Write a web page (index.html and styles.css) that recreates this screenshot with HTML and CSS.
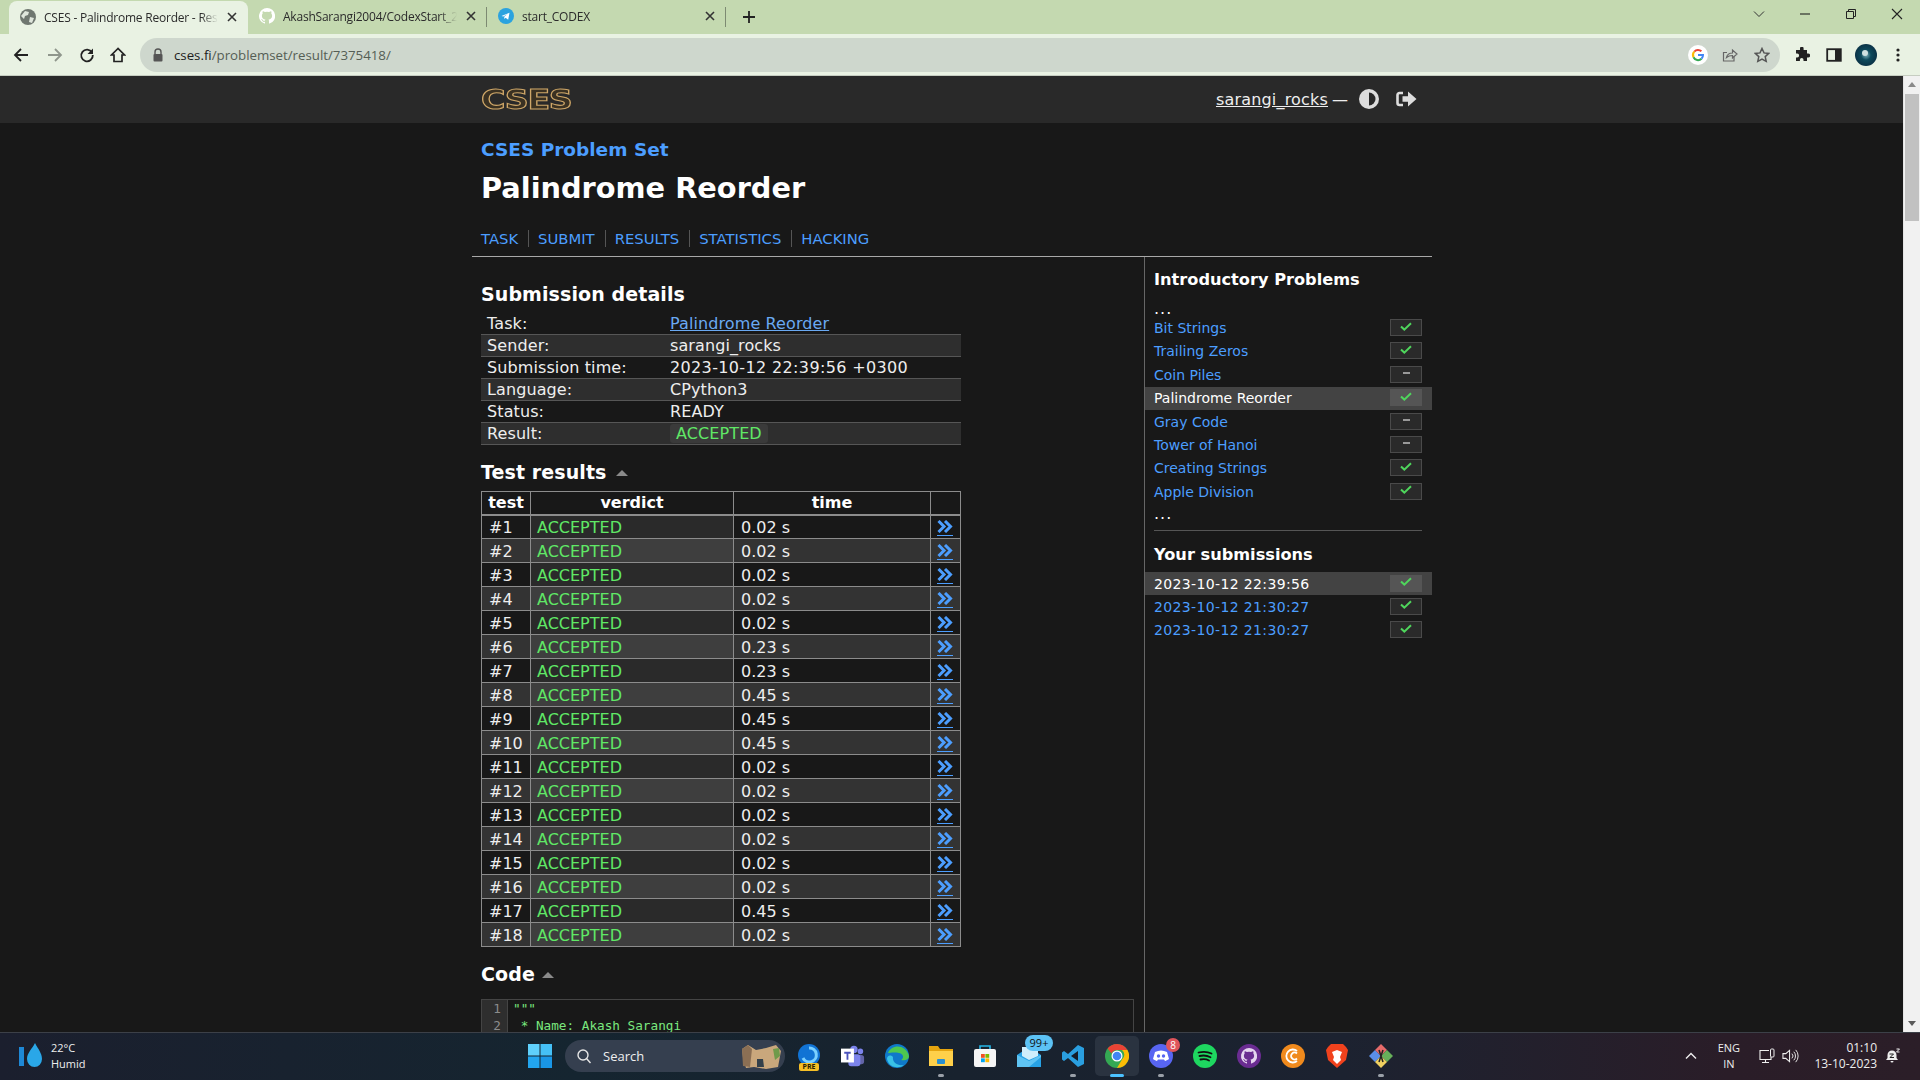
FILE: index.html
```html
<!DOCTYPE html>
<html lang="en">
<head>
<meta charset="utf-8">
<title>CSES - Palindrome Reorder - Results</title>
<link rel="stylesheet" href="styles.css">
</head>
<body>
<svg class="defs" width="0" height="0" aria-hidden="true">
  <symbol id="chk" viewBox="0 0 12 9"><path d="M1 4.5 4.3 7.6 11 1.2" fill="none" stroke="#4fd65c" stroke-width="2"/></symbol>
  <symbol id="dbl" viewBox="0 0 16 13"><path d="M1.5 1 7 6.5 1.5 12M8 1l5.5 5.5L8 12" fill="none" stroke="#4c9eff" stroke-width="3"/></symbol>
  <symbol id="x" viewBox="0 0 12 12"><path d="M2 2l8 8M10 2l-8 8" stroke="#333" stroke-width="1.6" fill="none"/></symbol>
</svg>
<div class="chrome">
  <div class="tabstrip">
    <div class="tab active">
      <svg class="fav" viewBox="0 0 16 16"><circle cx="8" cy="8" r="8" fill="#6f7770"/><path d="M5 2l4 1-1 3-3 1-1 3-3-3zM10 8l4 1-2 5-3-1z" fill="#dfe6dc"/></svg>
      <span class="tabtext">CSES - Palindrome Reorder - Res</span>
      <svg class="tabx" viewBox="0 0 12 12"><use href="#x"/></svg>
    </div>
    <div class="tab">
      <svg class="fav" viewBox="0 0 16 16"><path d="M8 0a8 8 0 0 0-2.5 15.6c.4.1.5-.2.5-.4v-1.4c-2.2.5-2.7-1-2.7-1-.4-.9-.9-1.200-.9-1.200-.7-.5.1-.5.1-.5.8.100 1.200.8 1.200.8.700 1.200 1.900.9 2.300.700.100-.5.300-.9.500-1.100-1.800-.2-3.600-.9-3.600-4 0-.9.300-1.600.8-2.100-.1-.2-.4-1 .1-2.100 0 0 .7-.2 2.200.8a7.600 7.600 0 0 1 4 0c1.500-1 2.200-.8 2.200-.8.400 1.100.2 1.900.1 2.100.5.500.8 1.200.8 2.100 0 3.100-1.900 3.800-3.700 4 .3.300.6.800.6 1.500v2.200c0 .2.100.5.600.4A8 8 0 0 0 8 0z" fill="#fff"/></svg>
      <span class="tabtext">AkashSarangi2004/CodexStart_2</span>
      <svg class="tabx" viewBox="0 0 12 12"><use href="#x"/></svg>
    </div>
    <div class="tab">
      <svg class="fav" viewBox="0 0 16 16"><circle cx="8" cy="8" r="8" fill="#2ba3df"/><path d="M3.500 8l8-3.300-1.300 7-2.600-1.900-1.200 1.200-.2-2.200 3.500-2.900-4.400 2.700z" fill="#fff"/></svg>
      <span class="tabtext">start_CODEX</span>
      <svg class="tabx" viewBox="0 0 12 12"><use href="#x"/></svg>
    </div>
    <svg class="plus" viewBox="0 0 14 14"><path d="M7 1v12M1 7h12" stroke="#222" stroke-width="1.800"/></svg>
    <div class="winctl">
      <span><svg viewBox="0 0 12 12"><path d="M1 3.500l5 5 5-5" fill="none" stroke="#333"/></svg></span>
      <span><svg viewBox="0 0 12 12"><path d="M1 6h10" stroke="#222" stroke-width="1.100"/></svg></span>
      <span><svg viewBox="0 0 12 12"><path d="M1.500 3.500h7v7h-7zM3.500 3.500v-2h7v7h-2" fill="none" stroke="#222"/></svg></span>
      <span><svg viewBox="0 0 12 12"><path d="M1 1l10 10M11 1L1 11" stroke="#222" stroke-width="1.100"/></svg></span>
    </div>
  </div>
  <div class="toolbar">
    <span class="tb w34"><svg viewBox="0 0 16 16"><path d="M15 8H2M8 2 2 8l6 6" fill="none" stroke="#222" stroke-width="1.800"/></svg></span>
    <span class="tb w34"><svg viewBox="0 0 16 16"><path d="M1 8h13M8 2l6 6-6 6" fill="none" stroke="#8f968c" stroke-width="1.800"/></svg></span>
    <span class="tb w30"><svg viewBox="0 0 16 16"><path d="M13 5.500A5.800 5.800 0 1 0 13.800 8" fill="none" stroke="#222" stroke-width="1.800"/><path d="M14 1.500V7H8.500z" fill="#222"/></svg></span>
    <span class="tb w32"><svg viewBox="0 0 16 16"><path d="M8 1.500 1.500 8H4v6.500h8V8h2.500z" fill="none" stroke="#222" stroke-width="1.700"/></svg></span>
    <div class="omni">
      <svg class="lock" viewBox="0 0 12 14"><path d="M3 6V4a3 3 0 0 1 6 0v2" fill="none" stroke="#555" stroke-width="1.400"/><rect x="1.500" y="6" width="9" height="7.500" rx="1" fill="#555"/></svg>
      <span class="url"><b>cses.fi</b>/problemset/result/7375418/</span>
      <span class="omni-icons">
        <span class="tb w32"><svg viewBox="0 0 20 20"><circle cx="10" cy="10" r="10" fill="#fff"/><path d="M6.300 6.600A5 5 0 0 1 13.400 6.300" fill="none" stroke="#ea4335" stroke-width="2"/><path d="M5.500 12.300a5 5 0 0 1 .8-5.700" fill="none" stroke="#fbbc05" stroke-width="2"/><path d="M13.500 13.700a5 5 0 0 1-8-1.400" fill="none" stroke="#34a853" stroke-width="2"/><path d="M10 10h5a5 5 0 0 1-1.500 3.700" fill="none" stroke="#4285f4" stroke-width="2"/></svg></span>
        <span class="tb w32"><svg viewBox="0 0 16 16"><path d="M12 9.500V14H1.500V5.500H5" fill="none" stroke="#666" stroke-width="1.200"/><path d="M4.500 10.500c.7-3 3-4.500 6-4.500V3l4.500 4-4.500 4V8.500c-2.500 0-4.500.7-6 2z" fill="none" stroke="#666" stroke-width="1.200"/></svg></span>
        <span class="tb w32"><svg viewBox="0 0 16 16"><path d="M8 1.500l2 4.400 4.800.5-3.600 3.200 1 4.700L8 12l-4.200 2.300 1-4.700L1.200 6.400 6 5.900z" fill="none" stroke="#555" stroke-width="1.500"/></svg></span>
      </span>
    </div>
    <span class="tb w32 ml6"><svg viewBox="0 0 16 16"><path d="M6 1.500a1.800 1.800 0 0 1 3.600 0V3H13v3.500h1.200a2 2 0 0 1 0 4H13V14H9.500v-1.200a1.800 1.800 0 0 0-3.600 0V14H2v-3.600h1.200a1.900 1.900 0 0 0 0-3.800H2V3h4z" fill="#222"/></svg></span>
    <span class="tb w32"><svg viewBox="0 0 16 16"><rect x="1.200" y="2.200" width="13.600" height="11.600" fill="none" stroke="#222" stroke-width="1.800"/><rect x="9" y="2" width="6" height="12" fill="#222"/></svg></span>
    <span class="tb w32"><svg class="avatar" viewBox="0 0 22 22"><defs><radialGradient id="av"><stop offset="0" stop-color="#7fb3bd"/><stop offset=".45" stop-color="#0d4a5c"/><stop offset="1" stop-color="#0a3246"/></radialGradient></defs><circle cx="11" cy="11" r="11" fill="url(#av)"/><circle cx="10" cy="9" r="3" fill="#cfe0e0"/></svg></span>
    <span class="tb w32"><svg viewBox="0 0 16 16"><circle cx="8" cy="3" r="1.600" fill="#222"/><circle cx="8" cy="8" r="1.600" fill="#222"/><circle cx="8" cy="13" r="1.600" fill="#222"/></svg></span>
  </div>
</div>

<div class="viewport">
  <div class="page">
    <header class="sitehead">
      <div class="wrap headrow">
        <a class="logo">CSES</a>
        <div class="user">
          <a class="username">sarangi_rocks</a>
          <span class="dash">—</span>
          <svg class="contrast" viewBox="0 0 20 20"><circle cx="10" cy="10" r="10" fill="#ddd"/><path d="M10 3.500a6.500 6.500 0 0 1 0 13z" fill="#292929"/></svg>
          <svg class="logout" viewBox="0 0 22 18"><path d="M8 3H4.500A2 2 0 0 0 2.500 5v8a2 2 0 0 0 2 2H8" fill="none" stroke="#ddd" stroke-width="2.600"/><path d="M7.500 6.200h5.500V1.500L21.500 9 13 16.500v-4.700H7.500z" fill="#ddd"/></svg>
        </div>
      </div>
    </header>
    <div class="wrap">
      <div class="titles">
        <h2 class="settitle">CSES Problem Set</h2>
        <h1 class="tasktitle">Palindrome Reorder</h1>
        <nav class="tabs-nav"><a>TASK</a><a>SUBMIT</a><a>RESULTS</a><a>STATISTICS</a><a>HACKING</a></nav>
      </div>
      <div class="columns">
        <main class="content">
          <h3 class="sec first">Submission details</h3>
          <div class="details">
            <div class="drow"><span>Task:</span><a class="dlink">Palindrome Reorder</a></div>
            <div class="drow"><span>Sender:</span><span>sarangi_rocks</span></div>
            <div class="drow"><span>Submission time:</span><span class="num">2023-10-12 22:39:56 +0300</span></div>
            <div class="drow"><span>Language:</span><span>CPython3</span></div>
            <div class="drow"><span>Status:</span><span>READY</span></div>
            <div class="drow"><span>Result:</span><span class="chip">ACCEPTED</span></div>
          </div>
          <h3 class="sec">Test results <i class="tri"></i></h3>
          <table class="tests">
            <colgroup><col class="c1"><col class="c2"><col class="c3"><col class="c4"></colgroup>
            <thead><tr><th>test</th><th>verdict</th><th>time</th><th></th></tr></thead>
            <tbody>
              <tr><td>#1</td><td class="v">ACCEPTED</td><td>0.02 s</td><td class="go"><a><svg><use href="#dbl"/></svg></a></td></tr>
              <tr><td>#2</td><td class="v">ACCEPTED</td><td>0.02 s</td><td class="go"><a><svg><use href="#dbl"/></svg></a></td></tr>
              <tr><td>#3</td><td class="v">ACCEPTED</td><td>0.02 s</td><td class="go"><a><svg><use href="#dbl"/></svg></a></td></tr>
              <tr><td>#4</td><td class="v">ACCEPTED</td><td>0.02 s</td><td class="go"><a><svg><use href="#dbl"/></svg></a></td></tr>
              <tr><td>#5</td><td class="v">ACCEPTED</td><td>0.02 s</td><td class="go"><a><svg><use href="#dbl"/></svg></a></td></tr>
              <tr><td>#6</td><td class="v">ACCEPTED</td><td>0.23 s</td><td class="go"><a><svg><use href="#dbl"/></svg></a></td></tr>
              <tr><td>#7</td><td class="v">ACCEPTED</td><td>0.23 s</td><td class="go"><a><svg><use href="#dbl"/></svg></a></td></tr>
              <tr><td>#8</td><td class="v">ACCEPTED</td><td>0.45 s</td><td class="go"><a><svg><use href="#dbl"/></svg></a></td></tr>
              <tr><td>#9</td><td class="v">ACCEPTED</td><td>0.45 s</td><td class="go"><a><svg><use href="#dbl"/></svg></a></td></tr>
              <tr><td>#10</td><td class="v">ACCEPTED</td><td>0.45 s</td><td class="go"><a><svg><use href="#dbl"/></svg></a></td></tr>
              <tr><td>#11</td><td class="v">ACCEPTED</td><td>0.02 s</td><td class="go"><a><svg><use href="#dbl"/></svg></a></td></tr>
              <tr><td>#12</td><td class="v">ACCEPTED</td><td>0.02 s</td><td class="go"><a><svg><use href="#dbl"/></svg></a></td></tr>
              <tr><td>#13</td><td class="v">ACCEPTED</td><td>0.02 s</td><td class="go"><a><svg><use href="#dbl"/></svg></a></td></tr>
              <tr><td>#14</td><td class="v">ACCEPTED</td><td>0.02 s</td><td class="go"><a><svg><use href="#dbl"/></svg></a></td></tr>
              <tr><td>#15</td><td class="v">ACCEPTED</td><td>0.02 s</td><td class="go"><a><svg><use href="#dbl"/></svg></a></td></tr>
              <tr><td>#16</td><td class="v">ACCEPTED</td><td>0.02 s</td><td class="go"><a><svg><use href="#dbl"/></svg></a></td></tr>
              <tr><td>#17</td><td class="v">ACCEPTED</td><td>0.45 s</td><td class="go"><a><svg><use href="#dbl"/></svg></a></td></tr>
              <tr><td>#18</td><td class="v">ACCEPTED</td><td>0.02 s</td><td class="go"><a><svg><use href="#dbl"/></svg></a></td></tr>
            </tbody>
          </table>
          <h3 class="sec">Code <i class="tri near"></i></h3>
          <div class="code">
            <div class="gutter"><div>1</div><div>2</div></div>
            <pre class="src">"""
 * Name: Akash Sarangi</pre>
          </div>
        </main>
        <aside class="side">
          <h4 class="sidehead">Introductory Problems</h4>
          <div class="srow dots">...</div>
          <div class="srow"><a>Bit Strings</a><span class="box"><svg><use href="#chk"/></svg></span></div>
          <div class="srow"><a>Trailing Zeros</a><span class="box"><svg><use href="#chk"/></svg></span></div>
          <div class="srow"><a>Coin Piles</a><span class="box"><i class="minus"></i></span></div>
          <div class="srow cur"><a>Palindrome Reorder</a><span class="box"><svg><use href="#chk"/></svg></span></div>
          <div class="srow"><a>Gray Code</a><span class="box"><i class="minus"></i></span></div>
          <div class="srow"><a>Tower of Hanoi</a><span class="box"><i class="minus"></i></span></div>
          <div class="srow"><a>Creating Strings</a><span class="box"><svg><use href="#chk"/></svg></span></div>
          <div class="srow"><a>Apple Division</a><span class="box"><svg><use href="#chk"/></svg></span></div>
          <div class="srow dots end">...</div>
          <hr class="sep">
          <h4 class="sidehead sub">Your submissions</h4>
          <div class="srow cur"><a class="num">2023-10-12 22:39:56</a><span class="box"><svg><use href="#chk"/></svg></span></div>
          <div class="srow"><a class="num">2023-10-12 21:30:27</a><span class="box"><svg><use href="#chk"/></svg></span></div>
          <div class="srow"><a class="num">2023-10-12 21:30:27</a><span class="box"><svg><use href="#chk"/></svg></span></div>
        </aside>
      </div>
    </div>
  </div>
  <div class="scrollbar">
    <i class="sb-up"></i>
    <div class="sb-thumb"></div>
    <i class="sb-down"></i>
  </div>
</div>

<footer class="taskbar">
  <div class="weather">
    <svg class="wicon" viewBox="0 0 24 26"><rect x="0" y="4" width="5" height="19" fill="#1e88d6"/><path d="M16 0c3 6 7 10 7 16a7.500 8 0 0 1-15 0c0-6 5-10 8-16z" fill="#2aa7e8"/></svg>
    <div class="wtext"><div>22°C</div><div>Humid</div></div>
  </div>
  <span class="ti win"><svg viewBox="0 0 24 24"><rect x="0" y="0" width="11.500" height="11.500" fill="#5fd0fb"/><rect x="12.500" y="0" width="11.500" height="11.500" fill="#45c0f6"/><rect x="0" y="12.500" width="11.500" height="11.500" fill="#22a5ee"/><rect x="12.500" y="12.500" width="11.500" height="11.500" fill="#1996e6"/></svg></span>
  <div class="search">
    <svg viewBox="0 0 16 16" class="sicon"><circle cx="7" cy="7" r="5" fill="none" stroke="#e6e6e6" stroke-width="1.400"/><path d="M10.500 10.500 14.500 15" stroke="#e6e6e6" stroke-width="1.400"/></svg>
    <span>Search</span>
    <svg viewBox="0 0 44 26" class="doodle"><path d="M3 6l6-4 8 5 10-2 10-3 5 6-3 16-12 2-12-2-8 1-3-10z" fill="#c9a77c"/><path d="M3 6l6-4 4 4-2 18-7-1z" fill="#8b6f54"/><path d="M34 6l6-1 1 8-5 4z" fill="#6f9a4a"/><path d="M18 16l6 0 1 8-7 0z" fill="#33404a"/></svg>
  </div>
  <div class="apps">
    <span class="ti"><svg viewBox="0 0 24 24"><circle cx="12" cy="11" r="11" fill="#1173d4"/><path d="M12 4a7 7 0 1 1-6 10" fill="none" stroke="#7ad0ff" stroke-width="3"/></svg><b class="badge pre">PRE</b></span>
    <span class="ti"><svg viewBox="0 0 26 24"><circle cx="21" cy="7" r="3" fill="#7b83eb"/><rect x="15" y="11" width="10" height="10" rx="3" fill="#6264a7"/><circle cx="14" cy="5" r="4" fill="#7b83eb"/><rect x="8" y="10" width="13" height="13" rx="3" fill="#7b83eb"/><rect x="0" y="4" width="14" height="15" fill="#fff"/><path d="M3.500 7.500h7v2H8V16H6V9.500H3.500z" fill="#4b53bc"/></svg></span>
    <span class="ti"><svg viewBox="0 0 24 24"><circle cx="12" cy="12" r="12" fill="#0f79c9"/><path d="M3 9C6 1 20-1 24 12c0 4-5 5-8 4 3-2 3-6-2-7-5-1-9 0-11 0z" fill="#4ec84f"/><path d="M8 13c-1 6 6 9 11 8-5 4-15 3-17-6 0-3 3-5 6-2z" fill="#39c2e6"/></svg></span>
    <span class="ti"><svg viewBox="0 0 24 24"><path d="M0 2h9l2 3h13v3H0z" fill="#e6a50f"/><rect x="0" y="7" width="24" height="15" fill="#ffd04a"/><rect x="8" y="15" width="8" height="5" rx="1" fill="#2a8fd0"/></svg><i class="run"></i></span>
    <span class="ti"><svg viewBox="0 0 24 24"><path d="M7 6V2h10v4" fill="none" stroke="#25b7e8" stroke-width="1.600"/><rect x="1" y="5" width="22" height="18" rx="2" fill="#f5f5f5"/><rect x="8" y="10" width="3.800" height="3.800" fill="#f25022"/><rect x="12.400" y="10" width="3.800" height="3.800" fill="#7fba00"/><rect x="8" y="14.400" width="3.800" height="3.800" fill="#00a4ef"/><rect x="12.400" y="14.400" width="3.800" height="3.800" fill="#ffb900"/></svg></span>
    <span class="ti"><svg viewBox="0 0 24 24"><path d="M0 11 12 3l12 8v12H0z" fill="#27a2e5"/><path d="M0 11l12 6 12-6v2L12 23H0z" fill="#5fc4f3"/><path d="M5 3h16v9l-9 4-7-4z" fill="#cfeefb"/></svg><b class="badge mail">99+</b></span>
    <span class="ti"><svg viewBox="0 0 24 24"><path d="M17 1 23 4v16l-6 3-10-9-4 3-2-1.500V8.500L3 7l4 3z" fill="#2a9fe0"/><path d="M17 7 10 12l7 5z" fill="#151c28"/></svg><i class="run"></i></span>
    <span class="ti sel"><svg viewBox="0 0 24 24"><circle cx="12" cy="12" r="12" fill="#34a853"/><path d="M12 0a12 12 0 0 1 10.400 6H12a6 6 0 0 0-5.500 3.500L2.600 4.600A12 12 0 0 1 12 0z" fill="#ea4335"/><path d="M22.400 6A12 12 0 0 1 12 24l5-8.500A6 6 0 0 0 17 6z" fill="#fbbc05"/><circle cx="12" cy="12" r="5.500" fill="#fff"/><circle cx="12" cy="12" r="4.300" fill="#4285f4"/></svg><i class="run wide"></i></span>
    <span class="ti"><svg viewBox="0 0 24 24"><circle cx="12" cy="12" r="12" fill="#5865f2"/><path d="M6 8c4-2 8-2 12 0l2 7c-1.500 1.200-3 1.800-4 2l-1-1.500h-6L8 17c-1-.2-2.500-.8-4-2z" fill="#fff"/><circle cx="9.500" cy="12" r="1.700" fill="#5865f2"/><circle cx="14.500" cy="12" r="1.700" fill="#5865f2"/></svg><b class="badge red">8</b><i class="run"></i></span>
    <span class="ti"><svg viewBox="0 0 24 24"><circle cx="12" cy="12" r="12" fill="#1ed760"/><path d="M5.500 8.500c4-1 9-1 13 1M6.500 12c3.500-.8 7.500-.6 11 1.200M7.500 15.500c3-.6 6-.4 8.500 1" fill="none" stroke="#111" stroke-width="1.800" stroke-linecap="round"/></svg></span>
    <span class="ti"><svg viewBox="-4 -4 24 24"><circle cx="8" cy="8" r="12" fill="#6a2c91"/><path d="M8 0a8 8 0 0 0-2.500 15.600c.4.100.5-.2.5-.4v-1.400c-2.200.5-2.700-1-2.700-1-.4-.9-.9-1.200-.9-1.200-.7-.5.1-.5.1-.5.8.100 1.200.8 1.200.8.700 1.200 1.900.9 2.300.7.100-.5.300-.9.500-1.100-1.800-.2-3.600-.9-3.600-4 0-.9.300-1.600.8-2.100-.1-.2-.4-1 .1-2.100 0 0 .7-.2 2.200.8a7.600 7.600 0 0 1 4 0c1.500-1 2.200-.8 2.200-.8.400 1.100.2 1.900.1 2.100.5.500.8 1.200.8 2.100 0 3.100-1.900 3.800-3.700 4 .3.300.6.800.6 1.500v2.200c0 .2.100.5.600.4A8 8 0 0 0 8 0z" fill="#e5d5ef"/></svg></span>
    <span class="ti"><svg viewBox="0 0 24 24"><circle cx="12" cy="12" r="12" fill="#f08a1d"/><path d="M16 7a6.500 6.500 0 1 0 0 10" fill="none" stroke="#fff" stroke-width="1.800"/><path d="M16 9.500a3.500 3.500 0 1 0 0 5" fill="none" stroke="#fff" stroke-width="1.800"/></svg></span>
    <span class="ti"><svg viewBox="0 0 22 24"><path d="M5 0h12l3 3 2 3-2 10-9 8-9-8L0 6l2-3z" fill="#f1421d"/><path d="M6 8l5-2 5 2-2 5 1 3-4 4-4-4 1-3z" fill="#fff"/></svg></span>
    <span class="ti"><svg viewBox="0 0 24 24"><path d="M6 6l6 6-6 6-6-6z" fill="#5a8ee6"/><path d="M12 0l6 6-6 6-6-6z" fill="#e66a6a"/><path d="M18 6l6 6-6 6-6-6z" fill="#67b05a"/><path d="M12 12l6 6-6 6-6-6z" fill="#f0d060"/><path d="M10 6l4 12M14 6l-4 12" stroke="#222" stroke-width="1.500"/></svg><i class="run"></i></span>
  </div>
  <div class="tray">
    <svg class="tchev" viewBox="0 0 12 8"><path d="M1 6.500 6 1.500l5 5" fill="none" stroke="#eee" stroke-width="1.400"/></svg>
    <div class="lang"><div>ENG</div><div>IN</div></div>
    <svg class="tnet" viewBox="0 0 16 16"><path d="M10 2.500H1v9h11V9M6.500 11.500v2.500M3 14.500h7" fill="none" stroke="#eee" stroke-width="1.100"/><rect x="11.500" y="1" width="3.500" height="8" rx="1" fill="none" stroke="#eee"/></svg>
    <svg class="tvol" viewBox="0 0 18 16"><path d="M1 5.500h3L8 2v12l-4-3.500H1z" fill="none" stroke="#eee" stroke-width="1.100"/><path d="M10.500 5.500a3.500 3.500 0 0 1 0 5M12.500 3.500a6.500 6.500 0 0 1 0 9M14.500 1.500a9.500 9.500 0 0 1 0 13" fill="none" stroke="#eee"/></svg>
    <div class="clock"><div>01:10</div><div>13-10-2023</div></div>
    <svg class="tbell" viewBox="0 0 16 16"><path d="M7 2.500a4.500 4.500 0 0 1 4.500 4.500v3l1.500 2H1l1.500-2V7A4.500 4.500 0 0 1 7 2.500zM5.500 13h3a1.500 1.500 0 0 1-3 0z" fill="#eee"/><path d="M4.500 6h4L5 9.500h4" fill="none" stroke="#222"/><path d="M11.500 1h3l-3 3h3" fill="none" stroke="#eee"/></svg>
  </div>
</footer>
</body>
</html>
```
FILE: styles.css
```css
* { box-sizing: border-box; }
html, body { margin: 0; padding: 0; height: 100%; overflow: hidden; }
body {
  display: flex;
  flex-direction: column;
  height: 1080px;
  background: #181818;
  color: #eee;
  font-family: "DejaVu Sans", Verdana, sans-serif;
  font-size: 16px;
}
.defs { position: absolute; }
a { cursor: pointer; }

/* browser chrome */
.chrome { flex: none; height: 76px; font-family: "Open Sans", "Noto Sans", sans-serif; }
.tabstrip {
  height: 34px;
  background: #c4d9b0;
  display: flex;
  align-items: flex-end;
  padding-left: 9px;
}
.tab {
  width: 239px;
  height: 34px;
  padding: 0 8px 2px 11px;
  display: flex;
  align-items: center;
  gap: 8px;
  font-size: 12px;
  letter-spacing: -.22px;
  color: #2b2b2b;
  position: relative;
}
.tab.active { background: #e9f2e3; border-radius: 8px 8px 0 0; height: 33px; padding-bottom: 1px; }
.tab + .tab::after {
  content: "";
  position: absolute;
  right: 0;
  top: 7px;
  height: 20px;
  width: 1px;
  background: #7d8a72;
}
.fav { width: 16px; height: 16px; flex: none; }
.tabtext {
  flex: 1;
  min-width: 0;
  white-space: nowrap;
  -webkit-mask-image: linear-gradient(to right, #000 90%, transparent);
  mask-image: linear-gradient(to right, #000 90%, transparent);
}
.tabx { width: 12px; height: 12px; flex: none; margin-right: 2px; }
.plus { width: 14px; height: 14px; margin: 0 0 10px 16px; flex: none; }
.winctl { margin-left: auto; display: flex; height: 34px; }
.winctl span { width: 46px; display: flex; align-items: center; justify-content: center; padding-bottom: 6px; }
.winctl svg { width: 12px; height: 12px; }

.toolbar {
  height: 42px;
  background: #e9f2e3;
  border-bottom: 1px solid #c6cdc1;
  display: flex;
  align-items: center;
  padding-left: 4px;
  padding-top: 1px;
}
.tb { display: flex; align-items: center; justify-content: center; flex: none; height: 32px; }
.tb svg { width: 16px; height: 16px; }
.tb svg.avatar { width: 22px; height: 22px; }
.w34 { width: 34px; }
.w32 { width: 32px; }
.w30 { width: 30px; }
.ml6 { margin-left: 6px; }
.omni {
  width: 1640px;
  height: 34px;
  margin-left: 6px;
  background: #ced7cd;
  border-radius: 17px;
  display: flex;
  align-items: center;
  padding: 0 2px 0 12px;
  flex: none;
}
.lock { width: 12px; height: 14px; flex: none; }
.url { margin-left: 10px; font-size: 13.3px; letter-spacing: -.02px; color: #555e55; font-family: "Open Sans", sans-serif; }
.url b { font-weight: 400; color: #1d1d1d; }
.omni-icons { margin-left: auto; display: flex; }
.omni-icons .tb:first-child svg { width: 20px; height: 20px; }

/* page */
.viewport { flex: 1; min-height: 0; display: flex; }
.page { flex: 1; min-width: 0; overflow: hidden; background: #181818; }
.scrollbar {
  flex: none;
  width: 17px;
  background: #f1f1f1;
  display: flex;
  flex-direction: column;
  align-items: center;
  border-left: 1px solid #e4e4e4;
}
.sb-up { margin-top: 6px; border: 4px solid transparent; border-top: 0; border-bottom: 5px solid #8a8a8a; }
.sb-thumb { width: 14px; height: 127px; margin-top: 7px; background: #c1c1c1; }
.sb-down { margin-top: auto; margin-bottom: 6px; border: 4px solid transparent; border-bottom: 0; border-top: 5px solid #5a5a5a; }

.wrap { width: 960px; margin-left: 472px; }
.sitehead { height: 47px; background: #292929; }
.headrow {
  height: 47px;
  display: flex;
  align-items: center;
  justify-content: space-between;
  padding: 0 15px 1px 9px;
}
.logo {
  font-family: "DejaVu Sans", sans-serif;
  font-weight: 700;
  font-size: 30px;
  line-height: 30px;
  letter-spacing: -1.2px;
  color: #3a3122;
  -webkit-text-stroke: 1.2px #cfa768;
  margin-top: 2px;
  transform: scaleX(1.11) scaleY(.86);
  transform-origin: left center;
}
.user { display: flex; align-items: center; }
.username { color: #eee; text-decoration: underline; letter-spacing: .18px; }
.dash { margin-left: 4px; color: #eee; }
.contrast { width: 20px; height: 20px; margin-left: 11px; }
.logout { width: 22px; height: 18px; margin-left: 16px; }

.titles { padding: 16px 0 9px 9px; border-bottom: 1px solid #a8a8a8; }
.settitle { margin: 0; font-size: 18.5px; line-height: 22px; font-weight: 700; color: #4c9eff; }
.tasktitle { margin: 9px 0 0; font-size: 28.8px; line-height: 36px; font-weight: 700; color: #fff; }
.tabs-nav { margin-top: 24px; display: flex; font-size: 14.8px; line-height: 17px; }
.tabs-nav a { color: #4c9eff; padding: 0 10px 0 9px; border-right: 1px solid #555; }
.tabs-nav a:first-child { padding-left: 0; }
.tabs-nav a:last-child { border-right: 0; }

.columns { display: flex; }
.content { width: 672px; padding: 26px 10px 0 9px; height: 800px; flex: none; }
.sec {
  margin: 16px 0 8px;
  font-size: 19px;
  line-height: 22px;
  font-weight: 700;
  letter-spacing: .1px;
  color: #fff;
}
.sec.first { margin-top: 0; }
.tri {
  display: inline-block;
  vertical-align: 3px;
  margin-left: 3px;
  border: 6px solid transparent;
  border-top: 0;
  border-bottom: 6px solid #8a8a8a;
}
.tri.near { margin-left: 0; }

.details { width: 480px; letter-spacing: .1px; }
.drow {
  display: grid;
  grid-template-columns: 183px 1fr;
  align-items: center;
  height: 21px;
  padding-left: 6px;
  line-height: 21px;
}
.drow:nth-child(even) {
  height: 23px;
  background: #2e2e2e;
  border-top: 1px solid #565656;
  border-bottom: 1px solid #565656;
}
.dlink { color: #6aa9f2; text-decoration: underline; justify-self: start; }
.num { letter-spacing: .36px; }
.chip {
  justify-self: start;
  padding: 0 6px;
  height: 19px;
  line-height: 19px;
  border-radius: 3px;
  background: #3a3a3a;
  color: #60e866;
}

.tests { width: 479px; table-layout: fixed; border-collapse: collapse; }
.tests .c1 { width: 49px; }
.tests .c2 { width: 203px; }
.tests .c3 { width: 197px; }
.tests .c4 { width: 30px; }
.tests th, .tests td { border: 1px solid #8c8c8c; height: 24px; padding: 2px 0 0 7px; line-height: 20px; text-align: left; color: #eee; }
.tests thead tr th { height: 23px; text-align: center; padding: 0; color: #fff; font-weight: 700; border-bottom-width: 2px; }
.tests tbody tr:nth-child(even) td { background: #333; }
.tests td.v { color: #60e866; background: #2a2a2a; padding-left: 6px; }
.tests tbody tr:nth-child(even) td.v { background: #3e3e3e; }
.tests td.go { padding: 0; text-align: center; }
.go a { display: inline-block; width: 16px; height: 17px; margin-left: -1px; border-bottom: 1px solid #4c9eff; vertical-align: middle; }
.go svg { display: block; width: 16px; height: 13px; margin-top: 1px; }

.code { display: flex; border: 1px solid #444; width: 653px; margin-top: 14px; height: 60px; }
.gutter { width: 26px; flex: none; background: #2e2e2e; border-right: 1px solid #444; text-align: right; padding-right: 6px; color: #8c8c8c; }
.gutter, .src { font: 12.7px/17px "DejaVu Sans Mono", monospace; }
.src { margin: 0 0 0 5px; color: #7be87f; white-space: pre; }

/* sidebar */
.side { flex: 1; min-width: 0; border-left: 1px solid #666; padding: 12px 10px 0 9px; font-size: 14px; height: 775px; }
.sidehead { margin: 0 0 2px; font-size: 16.2px; line-height: 22px; font-weight: 700; color: #fff; }
.sidehead.sub { margin: 13px 0 6px; }
.srow {
  height: 23.4px;
  margin: 0 -10px 0 -9px;
  padding: 0 10px 0 9px;
  display: flex;
  align-items: center;
  justify-content: space-between;
}
.srow a { color: #4c9eff; }
.srow.dots { color: #fff; font-size: 16px; letter-spacing: 1px; padding-top: 7px; }
.srow.dots.end { padding-top: 0; padding-bottom: 3px; }
.srow.cur { background: #434343; }
.srow.cur a { color: #fff; }
.box {
  width: 32px;
  height: 17px;
  background: #2a2a2a;
  border: 1px solid #4a4a4a;
  display: flex;
  align-items: center;
  justify-content: center;
  padding-bottom: 3px;
  margin-top: -1px;
}
.srow.cur .box { background: #555; border-color: #555; }
.box svg { width: 12px; height: 9px; }
.minus { display: block; width: 7px; height: 2px; background: #999; }
.sep { border: 0; border-top: 1px solid #555; margin: 3px 0 0; }

/* taskbar */
.taskbar {
  flex: none;
  height: 48px;
  display: flex;
  align-items: center;
  padding-bottom: 2px;
  border-top: 1px solid #3c4048;
  background: linear-gradient(90deg, #1b1f2e 0%, #152530 30%, #18222e 50%, #1c2230 70%, #2a1d28 90%, #2b1e28 100%);
  color: #eee;
  font-family: "Open Sans", "Noto Sans", sans-serif;
  font-size: 11px;
}
.weather { width: 518px; flex: none; display: flex; align-items: center; padding-left: 19px; gap: 8px; }
.wicon { width: 24px; height: 26px; }
.wtext { line-height: 16px; }
.ti {
  width: 44px;
  height: 40px;
  flex: none;
  display: flex;
  align-items: center;
  justify-content: center;
  position: relative;
}
.ti svg { width: 24px; height: 24px; }
.search {
  width: 220px;
  height: 32px;
  margin-left: 3px;
  border-radius: 16px;
  background: #353f4f;
  display: flex;
  align-items: center;
  padding-left: 11px;
  font-size: 13px;
  flex: none;
}
.sicon { width: 16px; height: 16px; margin-right: 11px; }
.doodle { width: 44px; height: 26px; margin-left: auto; margin-right: 2px; }
.apps { display: flex; margin-left: 2px; }
.ti.sel { background: #2a3340; border-radius: 5px; }
.run { position: absolute; bottom: -1px; left: 50%; margin-left: -3px; width: 6px; height: 3px; border-radius: 2px; background: #9aa0a8; }
.run.wide { margin-left: -7px; width: 14px; background: #4cc2ff; }
.badge { position: absolute; border-radius: 10px; font-weight: 400; color: #111; text-align: center; }
.badge.mail { left: 18px; top: -1px; width: 28px; height: 16px; line-height: 16px; background: #5cc2f5; font-size: 11px; }
.badge.red { left: 27px; top: 2px; width: 14px; height: 14px; line-height: 14px; background: #e0555b; color: #fff; font-size: 10px; }
.badge.pre { left: 12px; top: 27px; width: 20px; height: 8px; line-height: 8px; border-radius: 2px; background: #f6bf26; color: #2a1c00; font-size: 7px; font-weight: 700; }
.tray { margin-left: auto; display: flex; align-items: center; padding-right: 19px; }
.tchev { width: 12px; height: 8px; margin-right: 10px; }
.lang { width: 44px; text-align: center; line-height: 16px; font-size: 11px; margin-right: 3px; }
.tnet { width: 16px; height: 16px; margin: 0 7.5px 0 4.6px; }
.tvol { width: 17px; height: 16px; }
.clock { width: 78px; text-align: right; line-height: 16px; font-size: 12px; margin-right: 8px; }
.tbell { width: 16px; height: 16px; }
```
